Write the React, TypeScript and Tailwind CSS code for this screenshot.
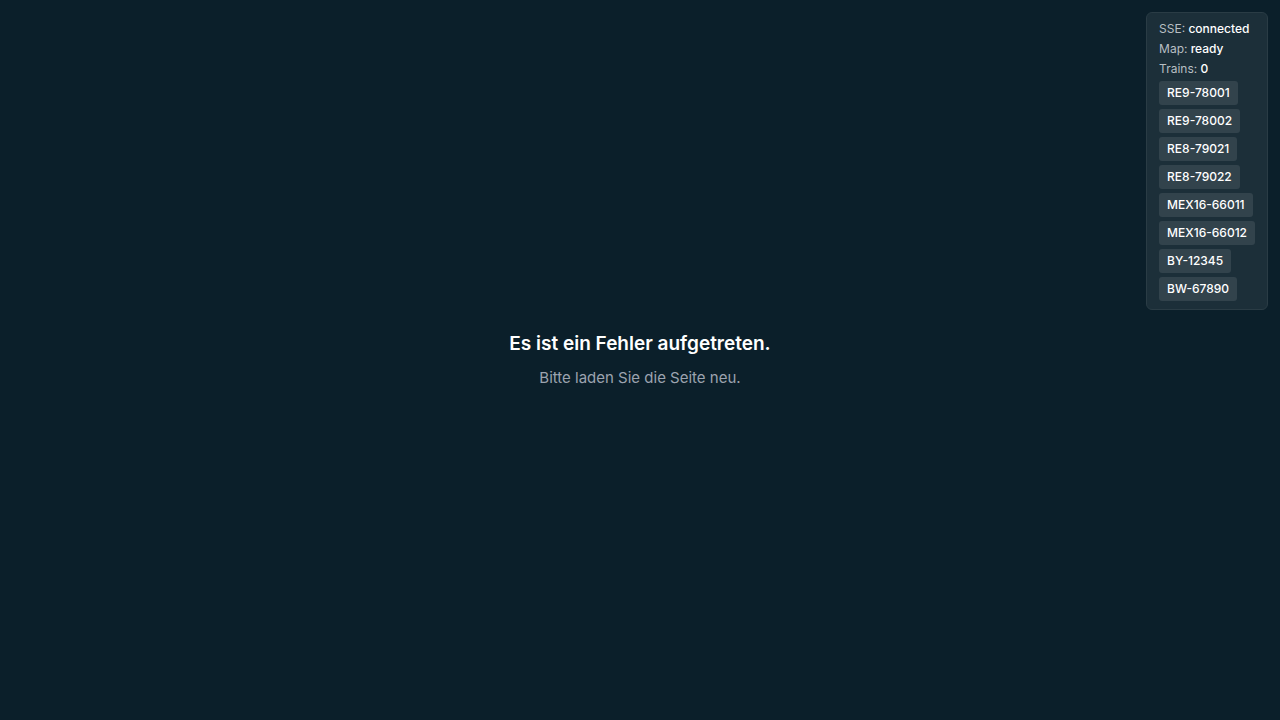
const trains = [
  'RE9-78001',
  'RE9-78002',
  'RE8-79021',
  'RE8-79022',
  'MEX16-66011',
  'MEX16-66012',
  'BY-12345',
  'BW-67890',
];

const stats = [
  { label: 'SSE', value: 'connected' },
  { label: 'Map', value: 'ready' },
  { label: 'Trains', value: '0' },
];

function StatusPanel() {
  return (
    <aside className="fixed top-3 right-3 flex flex-col gap-1 rounded-md border border-[#2a3c45] bg-[#1c2f39] px-3 py-2 text-xs text-white">
      {stats.map((stat) => (
        <div key={stat.label} className="font-medium">
          <span className="font-normal text-[#b8bfc3]">{stat.label}:</span> {stat.value}
        </div>
      ))}
      <ul className="flex flex-col items-start gap-1">
        {trains.map((train) => (
          <li key={train}>
            <button type="button" className="block rounded-[3px] bg-[#32434c] px-2 py-1 font-medium">
              {train}
            </button>
          </li>
        ))}
      </ul>
    </aside>
  );
}

export default function App() {
  return (
    <div className="flex min-h-screen items-center justify-center bg-[#0b1f2a] font-['Inter',sans-serif] text-white">
      <main className="text-center">
        <h1 className="mb-2 text-[19px] leading-7 font-semibold">Es ist ein Fehler aufgetreten.</h1>
        <p className="text-[15px] leading-6 text-[#9ca3af]">Bitte laden Sie die Seite neu.</p>
      </main>
      <StatusPanel />
    </div>
  );
}
